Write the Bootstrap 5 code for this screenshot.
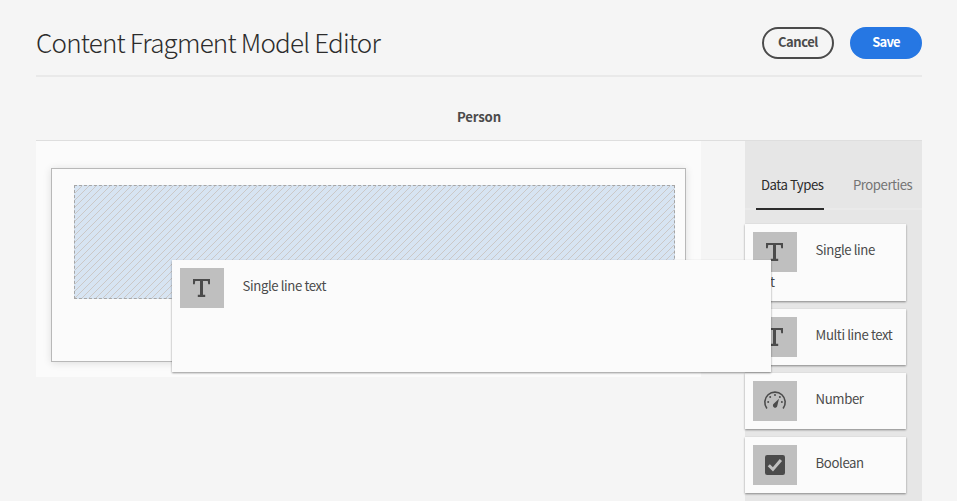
<!DOCTYPE html>
<html lang="en">
<head>
<meta charset="utf-8">
<meta name="viewport" content="width=device-width, initial-scale=1">
<title>Content Fragment Model Editor</title>
<link href="https://cdn.jsdelivr.net/npm/bootstrap@5.3.0/dist/css/bootstrap.min.css" rel="stylesheet">
<style>
body{background:#f5f5f5;color:#4b4b4b;font-family:"Noto Sans CJK SC","Open Sans",sans-serif;font-size:13.2px;letter-spacing:-.4px;line-height:20px;height:501px;overflow:hidden}
.editor{margin-left:36px;width:886px;height:501px}
.editor-head{height:77px;border-bottom:2px solid #e9e9e9}
.editor-title{font-size:26px;font-weight:300;line-height:40px;color:#2c2c2c;margin-top:22px;letter-spacing:-.8px;white-space:nowrap}
.pill{height:32px;width:72px;padding:0 0 2px;border-width:2px;font-size:13px;font-weight:700;letter-spacing:-.45px;line-height:26px;margin-top:27px}
.pill-quiet,.pill-quiet:hover{border-color:#4b4b4b;color:#4b4b4b}
.pill-cta,.pill-cta:hover{background:#2677e3;border-color:#2677e3;color:#fff;letter-spacing:-.75px}
.model-name{height:64px;border-bottom:1px solid #dedede;font-weight:700;letter-spacing:-.2px;padding-top:30px}
.canvas-area{width:665px;height:236px;background:#fbfbfb;padding:27px 15px 15px}
.form-box{width:635px;height:194px;border:1px solid #b8b8b8;box-shadow:0 1px 8px rgba(0,0,0,.12);padding:16px 10px 0 22px}
.drop-zone{height:114px;border:1px dashed #a6a6a6;background:#d7e4f2}
.side-panel{width:177px;height:360px;background:#e6e6e6}
.side-tabs{height:69px;border-bottom:2px solid #eaeaea;padding:33px 0 0 11px}
.side-tab{height:36px;border-bottom:2px solid transparent;color:#747474;padding:1px 0 0 5px;white-space:nowrap;letter-spacing:-.48px}
.side-tab.is-on{width:68px;border-color:#2c2c2c;color:#2c2c2c}
.type-list{padding-top:14px}
.type-item{width:161px;min-height:56px;background:#fbfbfb;box-shadow:0 1px 2px rgba(0,0,0,.42);padding:8px;line-height:32px}
.type-item.tall{height:77px}
.glyph{float:left;width:44px;height:40px;background:#bfbfbf;margin-right:18.6px}
.glyph svg{display:block}
.type-label{white-space:nowrap;padding-top:2px}
.type-rest{clear:both;line-height:20px}
.drag-ghost{position:absolute;left:172px;top:260px;width:599px;height:112px;background:#fbfbfb;box-shadow:0 1px 2px rgba(0,0,0,.42);padding:8px;line-height:32px;z-index:5}
</style>
</head>
<body>
<svg class="d-none">
<symbol id="i-text" viewBox="0 0 44 40"><path fill="#4b4b4b" d="M13 11h17v5.200h-1.800L27.800 13H23v13.800h2.200V29h-7.400v-2.200H20V13h-4.800l-.4 3.200H13z"/></symbol>
<symbol id="i-gauge" viewBox="0 0 44 40"><path fill="none" stroke="#4b4b4b" stroke-width="1.600" d="M13.900 27.500a10.200 10.200 0 1 1 16.200 0"/><g fill="#4b4b4b"><circle cx="15.200" cy="21" r="1"/><circle cx="17.200" cy="16" r="1"/><circle cx="22" cy="14" r="1"/><circle cx="26.900" cy="16" r="1"/><circle cx="28.900" cy="21" r="1"/><path d="M26 17.800l-1.700 6.900a2.200 2.200 0 1 1-3.600-1.900z"/></g></symbol>
<symbol id="i-check" viewBox="0 0 44 40"><rect x="12" y="10" width="20" height="20" rx="2.200" fill="#4b4b4b"/><path fill="none" stroke="#bfbfbf" stroke-width="3" d="M15.800 20.300l4.100 4.100 8-9.400"/></symbol>
</svg>
<main class="editor">
  <header class="editor-head d-flex justify-content-between">
    <h1 class="editor-title mb-0">Content Fragment Model Editor</h1>
    <div class="d-flex gap-3">
      <button class="btn rounded-pill pill pill-quiet">Cancel</button>
      <button class="btn rounded-pill pill pill-cta">Save</button>
    </div>
  </header>
  <div class="model-name text-center">Person</div>
  <div class="d-flex justify-content-between">
    <section class="canvas-area">
      <div class="form-box"><div class="drop-zone"><svg class="d-block" width="100%" height="100%"><defs><pattern id="hatch" width="7" height="7" patternUnits="userSpaceOnUse"><path d="M0 6h1v1H0zM1 5h1v1H1zM2 4h1v1H2zM3 3h1v1H3zM4 2h1v1H4zM5 1h1v1H5zM6 0h1v1H6z" fill="#cbc8c7"/></pattern></defs><rect width="100%" height="100%" fill="url(#hatch)"/></svg></div></div>
    </section>
    <aside class="side-panel">
      <div class="side-tabs d-flex">
        <div class="side-tab is-on">Data Types</div>
        <div class="side-tab ms-4">Properties</div>
      </div>
      <div class="type-list d-flex flex-column gap-2">
        <div class="type-item tall"><span class="glyph"><svg width="44" height="40"><use href="#i-text"/></svg></span><div class="type-label">Single line</div><div class="type-rest">text</div></div>
        <div class="type-item"><span class="glyph"><svg width="44" height="40"><use href="#i-text"/></svg></span><div class="type-label">Multi line text</div></div>
        <div class="type-item"><span class="glyph"><svg width="44" height="40"><use href="#i-gauge"/></svg></span><div class="type-label">Number</div></div>
        <div class="type-item"><span class="glyph"><svg width="44" height="40"><use href="#i-check"/></svg></span><div class="type-label">Boolean</div></div>
      </div>
    </aside>
  </div>
</main>
<div class="drag-ghost"><span class="glyph"><svg width="44" height="40"><use href="#i-text"/></svg></span><div class="type-label">Single line text</div></div>
<script src="https://cdn.jsdelivr.net/npm/bootstrap@5.3.0/dist/js/bootstrap.bundle.min.js"></script>
</body>
</html>
